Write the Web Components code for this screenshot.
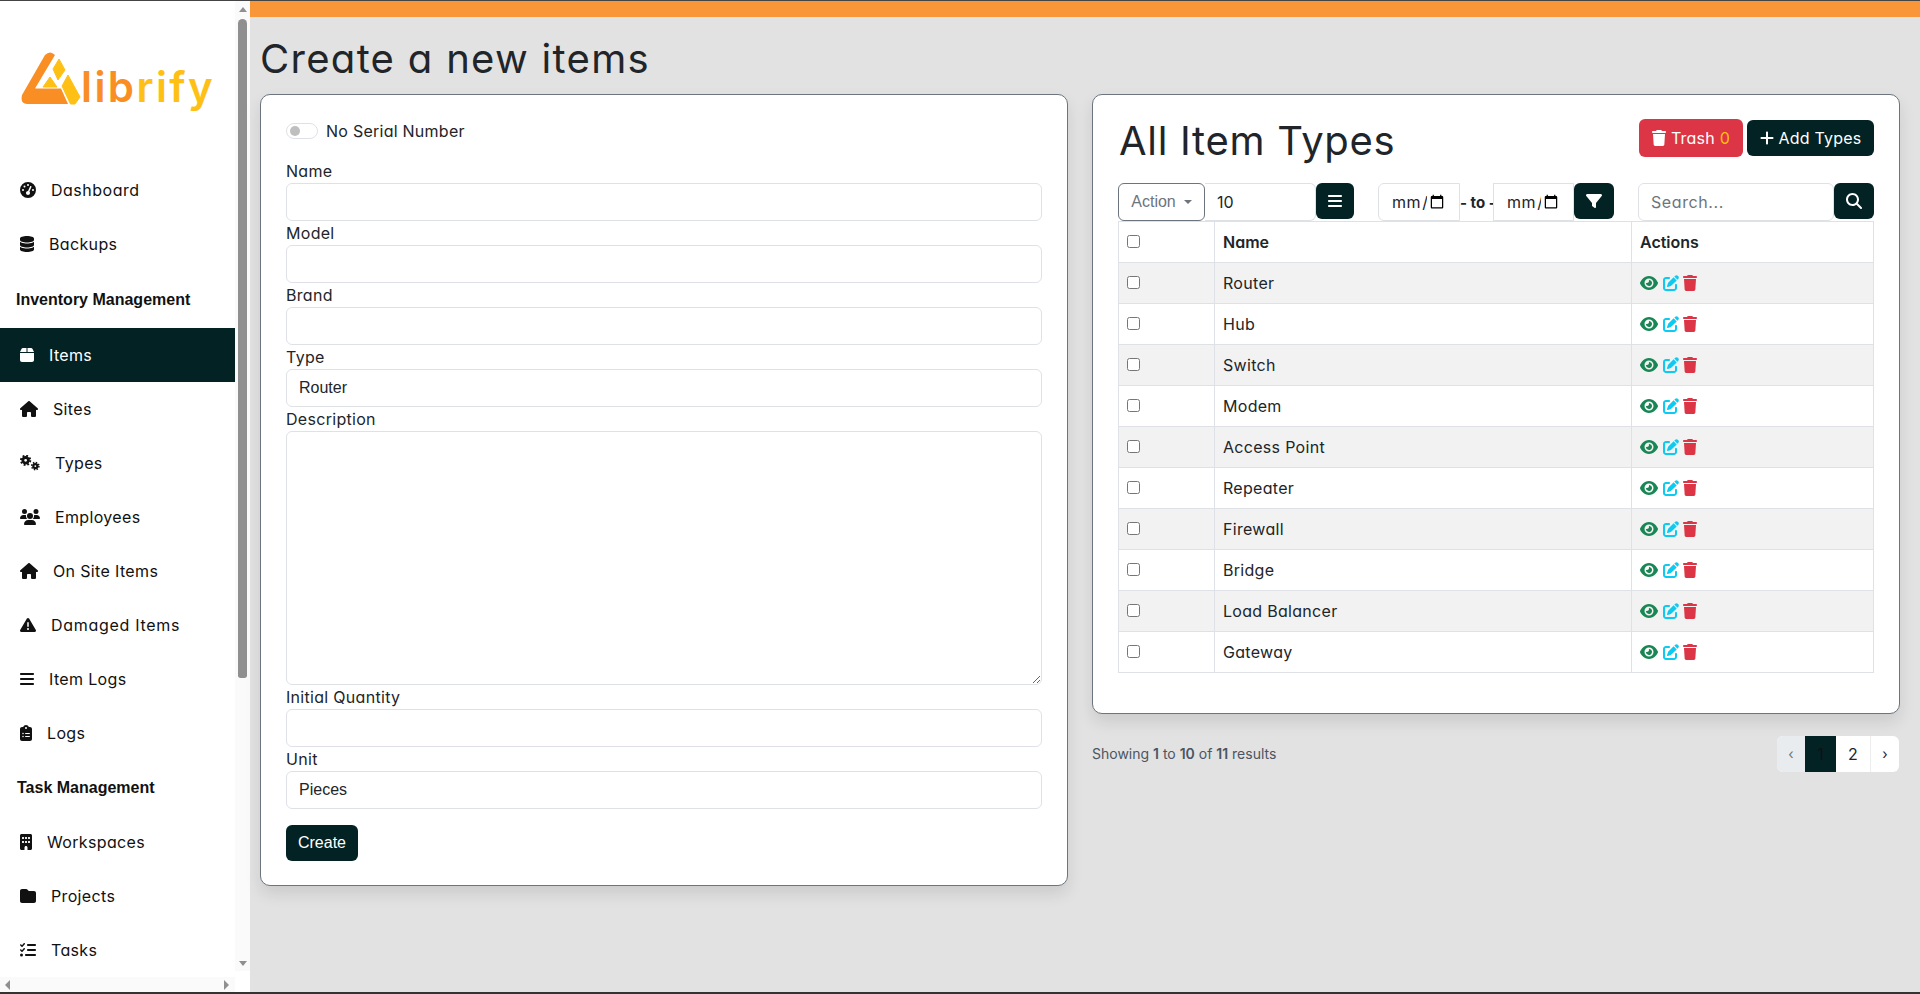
<!DOCTYPE html>
<html lang="en">

<head>
    <meta charset="UTF-8">
    <title>Create a new items</title>
    <style>
        html, body { margin: 0; height: 994px; overflow: hidden; }
        body {
            display: flex; flex-direction: column; background: #e2e2e2; color: #212529;
            font: 16px/24px Inter, "Noto Sans", sans-serif; font-feature-settings: "cv11";
            border-top: 1px solid #444; border-bottom: 2px solid #333; box-sizing: border-box;
        }
        app-shell { flex: 1; min-height: 0; }
    </style>
    <script defer>
        const ICONS = {
            gauge: ['0 0 512 512', 'M0 256a256 256 0 1 1 512 0A256 256 0 1 1 0 256zM288 96a32 32 0 1 0 -64 0 32 32 0 1 0 64 0zM256 416c35.3 0 64-28.7 64-64c0-17.4-6.9-33.1-18.1-44.6L366 161.7c5.3-12.1-.2-26.3-12.3-31.6s-26.3 .2-31.6 12.3L257.9 288c-.6 0-1.3 0-1.9 0c-35.3 0-64 28.7-64 64s28.7 64 64 64zM176 144a32 32 0 1 0 -64 0 32 32 0 1 0 64 0zM96 288a32 32 0 1 0 0-64 32 32 0 1 0 0 64zm352-32a32 32 0 1 0 -64 0 32 32 0 1 0 64 0z'],
            database: ['0 0 448 512', 'M448 80v48c0 44.2-100.3 80-224 80S0 172.2 0 128V80C0 35.8 100.3 0 224 0S448 35.8 448 80zM393.2 214.7c20.8-7.4 39.9-16.9 54.8-28.6V288c0 44.2-100.3 80-224 80S0 332.2 0 288V186.1c14.9 11.8 34 21.2 54.8 28.6C99.7 230.7 159.5 240 224 240s124.3-9.3 169.2-25.3zM0 346.1c14.9 11.8 34 21.2 54.8 28.6C99.7 390.7 159.5 400 224 400s124.3-9.3 169.2-25.3c20.8-7.4 39.9-16.9 54.8-28.6V432c0 44.2-100.3 80-224 80S0 476.2 0 432V346.1z'],
            box: ['0 0 448 512', 'M50.7 58.5L0 160H208V32H93.7C75.5 32 58.9 42.3 50.7 58.5zM240 160H448L397.3 58.5C389.1 42.3 372.5 32 354.3 32H240V160zm208 32H0V416c0 35.3 28.7 64 64 64H384c35.3 0 64-28.7 64-64V192z'],
            house: ['0 0 576 512', 'M575.8 255.5c0 18-15 32.1-32 32.1h-32l.7 160.2c0 2.7-.2 5.4-.5 8.1V472c0 22.1-17.9 40-40 40H456c-1.1 0-2.2 0-3.3-.1c-1.4 .1-2.8 .1-4.2 .1H416 392c-22.1 0-40-17.9-40-40V448 384c0-17.7-14.3-32-32-32H256c-17.7 0-32 14.3-32 32v64 24c0 22.1-17.9 40-40 40H160 128.1c-1.5 0-3-.1-4.5-.2c-1.2 .1-2.4 .2-3.6 .2H104c-22.1 0-40-17.9-40-40V360c0-.9 0-1.9 .1-2.8V287.6H32c-18 0-32-14-32-32.1c0-9 3-17 10-24L266.4 8c7-7 15-8 22-8s15 2 21 7L564.8 231.5c8 7 12 15 11 24z'],
            users: ['0 0 640 512', 'M144 0a80 80 0 1 1 0 160A80 80 0 1 1 144 0zM512 0a80 80 0 1 1 0 160A80 80 0 1 1 512 0zM0 298.7C0 239.8 47.8 192 106.7 192h42.7c15.9 0 31 3.5 44.6 9.7c-1.3 7.2-1.9 14.7-1.9 22.3c0 38.2 16.8 72.5 43.3 96c-.2 0-.4 0-.7 0H21.3C9.6 320 0 310.4 0 298.7zM405.3 320c-.2 0-.4 0-.7 0c26.6-23.5 43.3-57.8 43.3-96c0-7.6-.7-15-1.9-22.3c13.6-6.3 28.7-9.7 44.6-9.7h42.7C592.2 192 640 239.8 640 298.7c0 11.8-9.6 21.3-21.3 21.3H405.3zM224 224a96 96 0 1 1 192 0 96 96 0 1 1 -192 0zM128 485.3C128 411.7 187.7 352 261.3 352H378.7C452.3 352 512 411.7 512 485.3c0 14.7-11.9 26.7-26.7 26.7H154.7c-14.7 0-26.7-11.9-26.7-26.7z'],
            warning: ['0 0 512 512', 'M256 32c14.2 0 27.3 7.5 34.5 19.8l216 368c7.3 12.4 7.3 27.7 .2 40.1S486.3 480 472 480H40c-14.3 0-27.6-7.7-34.7-20.1s-7-27.8 .2-40.1l216-368C228.7 39.5 241.8 32 256 32zm0 128c-13.3 0-24 10.7-24 24V296c0 13.3 10.7 24 24 24s24-10.7 24-24V184c0-13.3-10.7-24-24-24zm32 224a32 32 0 1 0 -64 0 32 32 0 1 0 64 0z'],
            bars: ['0 0 448 512', 'M0 96C0 78.3 14.3 64 32 64H416c17.7 0 32 14.3 32 32s-14.3 32-32 32H32C14.3 128 0 113.7 0 96zM0 256c0-17.7 14.3-32 32-32H416c17.7 0 32 14.3 32 32s-14.3 32-32 32H32c-17.7 0-32-14.3-32-32zM448 416c0 17.7-14.3 32-32 32H32c-17.7 0-32-14.3-32-32s14.3-32 32-32H416c17.7 0 32 14.3 32 32z'],
            clipboard: ['0 0 384 512', 'M192 0c-41.8 0-77.4 26.7-90.5 64H64C28.7 64 0 92.7 0 128V448c0 35.3 28.7 64 64 64H320c35.3 0 64-28.7 64-64V128c0-35.3-28.7-64-64-64H282.5C269.4 26.7 233.8 0 192 0zm0 64a32 32 0 1 1 0 64 32 32 0 1 1 0-64zM72 272a24 24 0 1 1 48 0 24 24 0 1 1 -48 0zm104-16H304c8.8 0 16 7.2 16 16s-7.2 16-16 16H176c-8.8 0-16-7.2-16-16s7.2-16 16-16zM72 368a24 24 0 1 1 48 0 24 24 0 1 1 -48 0zm88 0c0-8.8 7.2-16 16-16H304c8.8 0 16 7.2 16 16s-7.2 16-16 16H176c-8.8 0-16-7.2-16-16z'],
            building: ['0 0 384 512', 'M48 0C21.5 0 0 21.5 0 48V464c0 26.5 21.5 48 48 48h96V432c0-26.5 21.5-48 48-48s48 21.5 48 48v80h96c26.5 0 48-21.5 48-48V48c0-26.5-21.5-48-48-48H48zM64 240c0-8.8 7.2-16 16-16h32c8.8 0 16 7.2 16 16v32c0 8.8-7.2 16-16 16H80c-8.8 0-16-7.2-16-16V240zm112-16h32c8.8 0 16 7.2 16 16v32c0 8.8-7.2 16-16 16H176c-8.8 0-16-7.2-16-16V240c0-8.8 7.2-16 16-16zm80 16c0-8.8 7.2-16 16-16h32c8.8 0 16 7.2 16 16v32c0 8.8-7.2 16-16 16H272c-8.8 0-16-7.2-16-16V240zM80 96h32c8.8 0 16 7.2 16 16v32c0 8.8-7.2 16-16 16H80c-8.8 0-16-7.2-16-16V112c0-8.8 7.2-16 16-16zm80 16c0-8.8 7.2-16 16-16h32c8.8 0 16 7.2 16 16v32c0 8.8-7.2 16-16 16H176c-8.8 0-16-7.2-16-16V112zM272 96h32c8.8 0 16 7.2 16 16v32c0 8.8-7.2 16-16 16H272c-8.8 0-16-7.2-16-16V112c0-8.8 7.2-16 16-16z'],
            folder: ['0 0 512 512', 'M64 480H448c35.3 0 64-28.7 64-64V160c0-35.3-28.7-64-64-64H288c-10.1 0-19.6-4.7-25.6-12.8L243.2 57.6C231.1 41.5 212.1 32 192 32H64C28.7 32 0 60.7 0 96V416c0 35.3 28.7 64 64 64z'],
            tasks: ['0 0 512 512', 'M152.1 38.2c9.9 8.9 10.7 24 1.8 33.9l-72 80c-4.4 4.9-10.6 7.8-17.2 7.9s-12.9-2.4-17.6-7L7 113C-2.3 103.6-2.3 88.4 7 79s24.6-9.4 33.9 0l22.1 22.1 55.1-61.2c8.9-9.9 24-10.7 33.9-1.8zm0 160c9.9 8.9 10.7 24 1.8 33.9l-72 80c-4.4 4.9-10.6 7.8-17.2 7.9s-12.9-2.4-17.6-7L7 273c-9.4-9.4-9.4-24.6 0-33.9s24.6-9.4 33.9 0l22.1 22.1 55.1-61.2c8.9-9.9 24-10.7 33.9-1.8zM224 96c0-17.7 14.3-32 32-32H480c17.7 0 32 14.3 32 32s-14.3 32-32 32H256c-17.7 0-32-14.3-32-32zm0 160c0-17.7 14.3-32 32-32H480c17.7 0 32 14.3 32 32s-14.3 32-32 32H256c-17.7 0-32-14.3-32-32zM160 416c0-17.7 14.3-32 32-32H480c17.7 0 32 14.3 32 32s-14.3 32-32 32H192c-17.7 0-32-14.3-32-32zM48 368a48 48 0 1 1 0 96 48 48 0 1 1 0-96z'],
            trash: ['0 0 448 512', 'M135.2 17.7L128 32H32C14.3 32 0 46.3 0 64S14.3 96 32 96H416c17.7 0 32-14.3 32-32s-14.3-32-32-32H320l-7.2-14.3C307.4 6.8 296.3 0 284.2 0H163.8c-12.1 0-23.2 6.8-28.6 17.7zM416 128H32L53.2 467c1.6 25.3 22.6 45 47.9 45H346.9c25.3 0 46.3-19.7 47.9-45L416 128z'],
            plus: ['0 0 448 512', 'M256 80c0-17.7-14.3-32-32-32s-32 14.3-32 32V224H48c-17.7 0-32 14.3-32 32s14.3 32 32 32H192V432c0 17.7 14.3 32 32 32s32-14.3 32-32V288H400c17.7 0 32-14.3 32-32s-14.3-32-32-32H256V80z'],
            filter: ['0 0 512 512', 'M3.9 54.9C10.5 40.9 24.5 32 40 32H472c15.5 0 29.5 8.9 36.1 22.9s4.6 30.5-5.2 42.5L320 320.9V448c0 12.1-6.8 23.2-17.7 28.6s-23.8 4.3-33.5-3l-64-48c-8.1-6-12.8-15.5-12.8-25.6V320.9L9 97.3C-.7 85.4-2.8 68.8 3.9 54.9z'],
            search: ['0 0 512 512', 'M416 208c0 45.9-14.9 88.3-40 122.7L502.6 457.4c12.5 12.5 12.5 32.8 0 45.3s-32.8 12.5-45.3 0L330.7 376c-34.4 25.2-76.8 40-122.7 40C93.1 416 0 322.9 0 208S93.1 0 208 0S416 93.1 416 208zM208 352a144 144 0 1 0 0-288 144 144 0 1 0 0 288z'],
            eye: ['0 0 576 512', 'M288 32c-80.8 0-145.5 36.8-192.6 80.6C48.6 156 17.3 208 2.5 243.7c-3.3 7.9-3.3 16.7 0 24.6C17.3 304 48.6 356 95.4 399.4C142.5 443.2 207.2 480 288 480s145.5-36.8 192.6-80.6c46.8-43.5 78.1-95.4 93-131.1c3.3-7.9 3.3-16.7 0-24.6c-14.9-35.7-46.2-87.7-93-131.1C433.5 68.8 368.8 32 288 32zM144 256a144 144 0 1 1 288 0 144 144 0 1 1 -288 0zm144-64c0 35.3-28.7 64-64 64c-7.1 0-13.9-1.2-20.3-3.3c-5.5-1.8-11.9 1.6-11.7 7.4c.3 6.9 1.3 13.8 3.2 20.7c13.7 51.2 66.4 81.6 117.6 67.9s81.6-66.4 67.9-117.6c-11.1-41.5-47.8-69.4-88.6-71.1c-5.8-.2-9.2 6.1-7.4 11.7c2.1 6.4 3.3 13.2 3.3 20.3z'],
            edit: ['0 0 512 512', 'M471.6 21.7c-21.9-21.9-57.3-21.9-79.2 0L362.3 51.7l97.9 97.9 30.1-30.1c21.9-21.9 21.9-57.3 0-79.2L471.6 21.7zm-299.2 220c-6.1 6.1-10.8 13.6-13.5 21.9l-29.6 88.8c-2.9 8.6-.6 18.1 5.8 24.6s15.9 8.7 24.6 5.8l88.8-29.6c8.2-2.7 15.7-7.4 21.9-13.5L437.7 172.3 339.7 74.3 172.4 241.7zM96 64C43 64 0 107 0 160V416c0 53 43 96 96 96H352c53 0 96-43 96-96V320c0-17.7-14.3-32-32-32s-32 14.3-32 32v96c0 17.7-14.3 32-32 32H96c-17.7 0-32-14.3-32-32V160c0-17.7 14.3-32 32-32h96c17.7 0 32-14.3 32-32s-14.3-32-32-32H96z']
        };

        // Gears are two dashed rings, the rest are single paths
        const GEARS = `<svg viewBox="0 0 640 512" width="20" height="16" fill="none" stroke="currentColor">
            <circle cx="180" cy="170" r="90" stroke-width="90"/><circle cx="180" cy="170" r="150" stroke-width="60" stroke-dasharray="59 58.8"/>
            <circle cx="490" cy="355" r="65" stroke-width="70"/><circle cx="490" cy="355" r="115" stroke-width="50" stroke-dasharray="45 45.3"/></svg>`;

        class FaIcon extends HTMLElement {
            constructor() {
                super();
                this.attachShadow({ mode: 'open' });
            }
            connectedCallback() {
                const name = this.getAttribute('name');
                const size = +(this.getAttribute('size') || 16);
                let svg = GEARS;
                if (ICONS[name]) {
                    const [box, d] = ICONS[name];
                    const ratio = box.split(' ')[2] / 512;
                    svg = `<svg viewBox="${box}" width="${size * ratio}" height="${size}" fill="currentColor"><path d="${d}"/></svg>`;
                }
                this.shadowRoot.innerHTML = `<style>:host{display:inline-flex;flex:none} svg{display:block}</style>${svg}`;
            }
        }
        customElements.define('fa-icon', FaIcon);

        class BrandLogo extends HTMLElement {
            constructor() {
                super();
                this.attachShadow({ mode: 'open' }).innerHTML = `
                    <style>
                        :host { display: flex; align-items: flex-end; height: 60px; }
                        svg { display: block; flex: none; align-self: flex-start; }
                        .word { font: 600 42px/50px Inter, sans-serif; letter-spacing: 2.4px; margin: 0 0 -2px -2px; color: #ffc015; font-feature-settings: normal; white-space: nowrap; }
                        .word b { font-weight: 600; color: #f98f24; }
                    </style>
                    <svg width="62" height="58" viewBox="0 0 62 58">
                        <path d="M24 5 Q29 0 34 5 L14 38.5 L40 38.5 L47 54 L6 54 Q-1 54 1 45 Z" fill="#f98f24"/>
                        <path d="M38 9 L44 20 L37 30 L32 19 Z" fill="#ffc015" stroke="#ffc015" stroke-linejoin="round"/>
                        <path d="M22 37 L29 27 L36 37 Z" fill="#ffc015" stroke="#ffc015" stroke-linejoin="round"/>
                        <path d="M47 25 L59 47 L54 54 L49.5 54 L41 36 Z" fill="#ffc015" stroke="#ffc015" stroke-linejoin="round"/>
                    </svg>
                    <div class="word"><b>lib</b>rify</div>`;
            }
        }
        customElements.define('brand-logo', BrandLogo);

        class NavItem extends HTMLElement {
            constructor() {
                super();
                this.attachShadow({ mode: 'open' });
            }
            connectedCallback() {
                this.shadowRoot.innerHTML = `
                    <style>
                        :host { display: flex; align-items: center; gap: 15px; height: 54px; padding-left: 20px; color: #111; flex: none; letter-spacing: .35px; }
                        :host([active]) { background: #022224; color: #fff; }
                    </style>
                    <fa-icon name="${this.getAttribute('icon')}"></fa-icon><slot></slot>`;
            }
        }
        customElements.define('nav-item', NavItem);

        class NavHeading extends HTMLElement {
            constructor() {
                super();
                this.attachShadow({ mode: 'open' }).innerHTML = `
                    <style>
                        :host { display: flex; align-items: center; flex: none; color: #111; font: bold 16px/24px "Liberation Sans", Arial, sans-serif; font-feature-settings: normal; }
                    </style><slot></slot>`;
            }
        }
        customElements.define('nav-heading', NavHeading);

        class FakeScrollbars extends HTMLElement {
            constructor() {
                super();
                this.attachShadow({ mode: 'open' }).innerHTML = `
                    <style>
                        :host { display: flex; flex-direction: column; width: 15px; flex: none; background: #fafafa; }
                        .up, .down { width: 0; height: 0; border: 4.5px solid transparent; margin: 0 auto; }
                        .up { border-bottom: 5px solid #8f8f8f; border-top: 0; margin-top: 6px; }
                        .down { border-top: 5px solid #8f8f8f; border-bottom: 0; margin-top: 283px; }
                        .thumb { width: 9px; height: 659px; margin: 7px 0 0 3px; background: #8f8f8f; border-radius: 5px 5px 3px 3px; }
                        .corner { flex: 1; background: #fff; margin-top: 5px; }
                    </style>
                    <div class="up"></div><div class="thumb"></div><div class="down"></div><div class="corner"></div>`;
            }
        }
        customElements.define('fake-scrollbars', FakeScrollbars);

        class SideBar extends HTMLElement {
            constructor() {
                super();
                this.attachShadow({ mode: 'open' }).innerHTML = `
                    <style>
                        :host { display: flex; width: 250px; flex: none; background: #fff; height: 100%; }
                        .col { width: 235px; display: flex; flex-direction: column; }
                        .scroll { flex: 1; min-height: 0; overflow: hidden; display: flex; flex-direction: column; }
                        brand-logo { margin: 49px 0 0 21px; }
                        .logo { height: 162px; flex: none; overflow: hidden; }
                        .hbar { height: 15px; flex: none; background: #fafafa; display: flex; justify-content: space-between; align-items: center; padding: 0 6px 0 5px; }
                        .hbar i { border: 5px solid transparent; }
                        .hbar i:first-child { border-right: 5px solid #8f8f8f; border-left: 0; }
                        .hbar i:last-child { border-left: 5px solid #8f8f8f; border-right: 0; }
                    </style>
                    <div class="col">
                        <div class="scroll">
                            <div class="logo"><brand-logo></brand-logo></div>
                            <slot></slot>
                        </div>
                        <div class="hbar"><i></i><i></i></div>
                    </div>
                    <fake-scrollbars></fake-scrollbars>`;
            }
        }
        customElements.define('side-bar', SideBar);

        class AppShell extends HTMLElement {
            constructor() {
                super();
                this.attachShadow({ mode: 'open' }).innerHTML = `
                    <style>
                        :host { display: flex; height: 100%; }
                        main { flex: 1; min-width: 0; display: flex; flex-direction: column; }
                        .accent { height: 16px; background: #f99738; flex: none; }
                        .page { padding: 18px 20px 0 10px; }
                        h1 { font-size: 40px; line-height: 48px; font-weight: 400; margin: 0 0 11px; letter-spacing: 1.3px; color: #212529; }
                        .cols { display: grid; grid-template-columns: 808px 808px; gap: 24px; align-items: start; }
                    </style>
                    <slot name="side"></slot>
                    <main>
                        <div class="accent"></div>
                        <div class="page">
                            <h1><slot name="title"></slot></h1>
                            <div class="cols"><slot></slot></div>
                        </div>
                    </main>`;
            }
        }
        customElements.define('app-shell', AppShell);

        class UiCard extends HTMLElement {
            constructor() {
                super();
                this.attachShadow({ mode: 'open' }).innerHTML = `
                    <style>
                        :host { display: block; box-sizing: border-box; background: #fff; border: 1px solid #6c757d; border-radius: 10px; padding: 24px 25px; box-shadow: 0 8px 16px rgba(0,0,0,.1); }
                    </style><slot></slot>`;
            }
        }
        customElements.define('ui-card', UiCard);

        const CONTROL_CSS = `
            input, select, textarea { display: block; box-sizing: border-box; width: 100%; height: 38px; margin: 0; padding: 6px 12px; background: #fff; color: #212529; border: 1px solid #dee2e6; border-radius: 6px; font: 16px/24px Inter, sans-serif; font-feature-settings: "cv11"; outline: 0; appearance: none; }
            select { font-family: "Liberation Sans", Arial, sans-serif; }
        `;

        class FormField extends HTMLElement {
            constructor() {
                super();
                this.attachShadow({ mode: 'open' });
            }
            connectedCallback() {
                const type = this.getAttribute('type') || 'text';
                const value = this.getAttribute('value') || '';
                let control = `<input type="text" value="${value}">`;
                if (type === 'select') control = `<select><option>${value}</option></select>`;
                if (type === 'textarea') control = `<textarea></textarea>`;
                this.shadowRoot.innerHTML = `
                    <style>
                        :host { display: block; }
                        label { display: block; height: 24px; letter-spacing: .3px; }
                        ${CONTROL_CSS}
                        textarea { height: 254px; resize: vertical; appearance: auto; }
                    </style>
                    <label>${this.getAttribute('label')}</label>${control}`;
            }
        }
        customElements.define('form-field', FormField);

        class ToggleSwitch extends HTMLElement {
            constructor() {
                super();
                this.attachShadow({ mode: 'open' }).innerHTML = `
                    <style>
                        :host { display: flex; align-items: center; gap: 8px; height: 24px; margin-bottom: 16px; letter-spacing: .25px; }
                        .track { width: 32px; height: 16px; box-sizing: border-box; border: 1px solid #dee2e6; border-radius: 8px; padding: 2px 3px; }
                        .knob { width: 10px; height: 10px; border-radius: 50%; background: #bfbfbf; }
                    </style>
                    <div class="track"><div class="knob"></div></div><slot></slot>`;
            }
        }
        customElements.define('toggle-switch', ToggleSwitch);

        class DarkButton extends HTMLElement {
            constructor() {
                super();
                this.attachShadow({ mode: 'open' }).innerHTML = `
                    <style>
                        :host { display: inline-flex; align-items: center; justify-content: center; gap: 5px; box-sizing: border-box; height: 36px; padding: 0 12px; background: #022224; color: #fff; border-radius: 6px; flex: none; white-space: nowrap; letter-spacing: .2px; }
                        :host([red]) { background: #dc3545; height: 38px; }
                    </style><slot></slot>`;
            }
        }
        customElements.define('dark-button', DarkButton);

        class TypesToolbar extends HTMLElement {
            constructor() {
                super();
                this.attachShadow({ mode: 'open' }).innerHTML = `
                    <style>
                        :host { display: flex; align-items: flex-start; height: 38px; }
                        ${CONTROL_CSS}
                        .action { box-sizing: border-box; width: 87px; height: 38px; flex: none; display: flex; align-items: center; justify-content: center; gap: 8px; border: 1px solid #6c757d; border-radius: 6px; color: #6c757d; font: 16px "Liberation Sans", Arial, sans-serif; font-feature-settings: normal; }
                        .caret { border: 4.8px solid transparent; border-top-color: #6c757d; border-bottom: 0; }
                        .count { width: 111px; flex: none; border-radius: 0 6px 6px 0; border-left: 0; }
                        .date { width: 82px; flex: none; padding: 6px 12px; appearance: auto; letter-spacing: .6px; }
                        .d1 { border-radius: 6px 0 0 6px; margin-left: 24px; }
                        .d2 { width: 81px; border-radius: 0; }
                        .to { width: 33px; flex: none; text-align: center; font-weight: 700; line-height: 40px; white-space: nowrap; font-size: 15px; }
                        .search { width: 196px; flex: none; margin-left: 24px; letter-spacing: .6px; }
                        dark-button { width: 40px; padding: 0; }
                        .menu { width: 38px; }
                        input::placeholder { color: #6c757d; }
                    </style>
                    <div class="action">Action<span class="caret"></span></div>
                    <input class="count" value="10">
                    <dark-button class="menu"><fa-icon name="bars"></fa-icon></dark-button>
                    <input class="date d1" type="date">
                    <span class="to">- to -</span>
                    <input class="date d2" type="date">
                    <dark-button><fa-icon name="filter"></fa-icon></dark-button>
                    <input class="search" placeholder="Search...">
                    <dark-button><fa-icon name="search"></fa-icon></dark-button>`;
            }
        }
        customElements.define('types-toolbar', TypesToolbar);

        class TypesTable extends HTMLElement {
            constructor() {
                super();
                this.attachShadow({ mode: 'open' });
            }
            connectedCallback() {
                const rows = this.getAttribute('items').split(',').map(name => `
                    <tr>
                        <td><input type="checkbox"></td>
                        <td>${name}</td>
                        <td><div class="acts">
                            <fa-icon name="eye" style="color:#198754"></fa-icon>
                            <fa-icon name="edit" style="color:#0dcaf0"></fa-icon>
                            <fa-icon name="trash" style="color:#dc3545"></fa-icon>
                        </div></td>
                    </tr>`).join('');
                this.shadowRoot.innerHTML = `
                    <style>
                        :host { display: block; }
                        table { width: 756px; table-layout: fixed; border-collapse: collapse; }
                        th, td { height: 41px; box-sizing: border-box; padding: 0 8px; border: 1px solid #dee2e6; text-align: left; letter-spacing: .3px; }
                        th { font-weight: 600; letter-spacing: 0; }
                        tbody tr:nth-child(odd) td { background: #f2f2f2; }
                        input { display: block; width: 13px; height: 13px; margin: -2px 0 0 0; }
                        .acts { display: flex; gap: 4.5px; align-items: center; margin-top: -1px; }
                    </style>
                    <table>
                        <colgroup><col style="width:96px"><col style="width:417px"><col></colgroup>
                        <thead><tr><th><input type="checkbox"></th><th>Name</th><th>Actions</th></tr></thead>
                        <tbody>${rows}</tbody>
                    </table>`;
            }
        }
        customElements.define('types-table', TypesTable);

        class PagerBar extends HTMLElement {
            constructor() {
                super();
                this.attachShadow({ mode: 'open' }).innerHTML = `
                    <style>
                        :host { display: flex; justify-content: space-between; align-items: center; margin: 22px 1px 0 0; height: 36px; font-size: 14px; color: #4b5563; }
                        .pages { display: flex; height: 36px; background: #fff; border-radius: 6px; overflow: hidden; color: #212529; font-size: 16px; }
                        .pages span { display: flex; align-items: center; justify-content: center; }
                        .prev { width: 28px; background: #e9ecef; color: #6c757d; font-size: 14px; }
                        .cur { width: 31px; background: #022224; color: #0b1214; }
                        .two { width: 34px; }
                        .next { width: 29px; border-left: 1px solid #eee; box-sizing: border-box; font-size: 14px; }
                    </style>
                    <div><slot></slot></div>
                    <div class="pages"><span class="prev">‹</span><span class="cur">1</span><span class="two">2</span><span class="next">›</span></div>`;
            }
        }
        customElements.define('pager-bar', PagerBar);

        class TypesPanel extends HTMLElement {
            constructor() {
                super();
                this.attachShadow({ mode: 'open' }).innerHTML = `
                    <style>
                        :host { display: block; }
                        .head { display: flex; justify-content: space-between; height: 64px; }
                        h2 { margin: 0 0 0 1px; font-size: 40px; line-height: 44px; font-weight: 400; letter-spacing: .7px; }
                        .btns { display: flex; gap: 4px; align-items: center; height: 38px; }
                        .zero { color: #ffc107; }
                        types-table { margin-bottom: 16px; }
                    </style>
                    <ui-card>
                        <div class="head">
                            <h2>All Item Types</h2>
                            <div class="btns">
                                <dark-button red style="width:104px"><fa-icon name="trash"></fa-icon>Trash <span class="zero">0</span></dark-button>
                                <dark-button style="width:127px"><fa-icon name="plus"></fa-icon>Add Types</dark-button>
                            </div>
                        </div>
                        <types-toolbar></types-toolbar>
                        <types-table items="Router,Hub,Switch,Modem,Access Point,Repeater,Firewall,Bridge,Load Balancer,Gateway"></types-table>
                    </ui-card>
                    <pager-bar><slot></slot></pager-bar>`;
            }
        }
        customElements.define('types-panel', TypesPanel);
    </script>
</head>

<body>
    <app-shell>
        <side-bar slot="side">
            <nav-item icon="gauge" style="letter-spacing:.5px">Dashboard</nav-item>
            <nav-item icon="database">Backups</nav-item>
            <nav-heading style="height:57px;padding-left:16px">Inventory Management</nav-heading>
            <nav-item icon="box" active>Items</nav-item>
            <nav-item icon="house">Sites</nav-item>
            <nav-item icon="gears">Types</nav-item>
            <nav-item icon="users">Employees</nav-item>
            <nav-item icon="house">On Site Items</nav-item>
            <nav-item icon="warning" style="letter-spacing:.7px">Damaged Items</nav-item>
            <nav-item icon="bars">Item Logs</nav-item>
            <nav-item icon="clipboard">Logs</nav-item>
            <nav-heading style="height:55px;padding-left:17px">Task Management</nav-heading>
            <nav-item icon="building">Workspaces</nav-item>
            <nav-item icon="folder">Projects</nav-item>
            <nav-item icon="tasks">Tasks</nav-item>
        </side-bar>
        <span slot="title">Create a new items</span>
        <ui-card>
            <toggle-switch>No Serial Number</toggle-switch>
            <form-field label="Name"></form-field>
            <form-field label="Model"></form-field>
            <form-field label="Brand"></form-field>
            <form-field label="Type" type="select" value="Router"></form-field>
            <form-field label="Description" type="textarea"></form-field>
            <form-field label="Initial Quantity"></form-field>
            <form-field label="Unit" type="select" value="Pieces"></form-field>
            <dark-button style="margin-top:16px;width:72px;font-family:'Liberation Sans',Arial,sans-serif;letter-spacing:0">Create</dark-button>
        </ui-card>
        <types-panel>Showing <b style="font-weight:600">1</b> to <b style="font-weight:600">10</b> of <b style="font-weight:600">11</b> results</types-panel>
    </app-shell>
</body>

</html>
